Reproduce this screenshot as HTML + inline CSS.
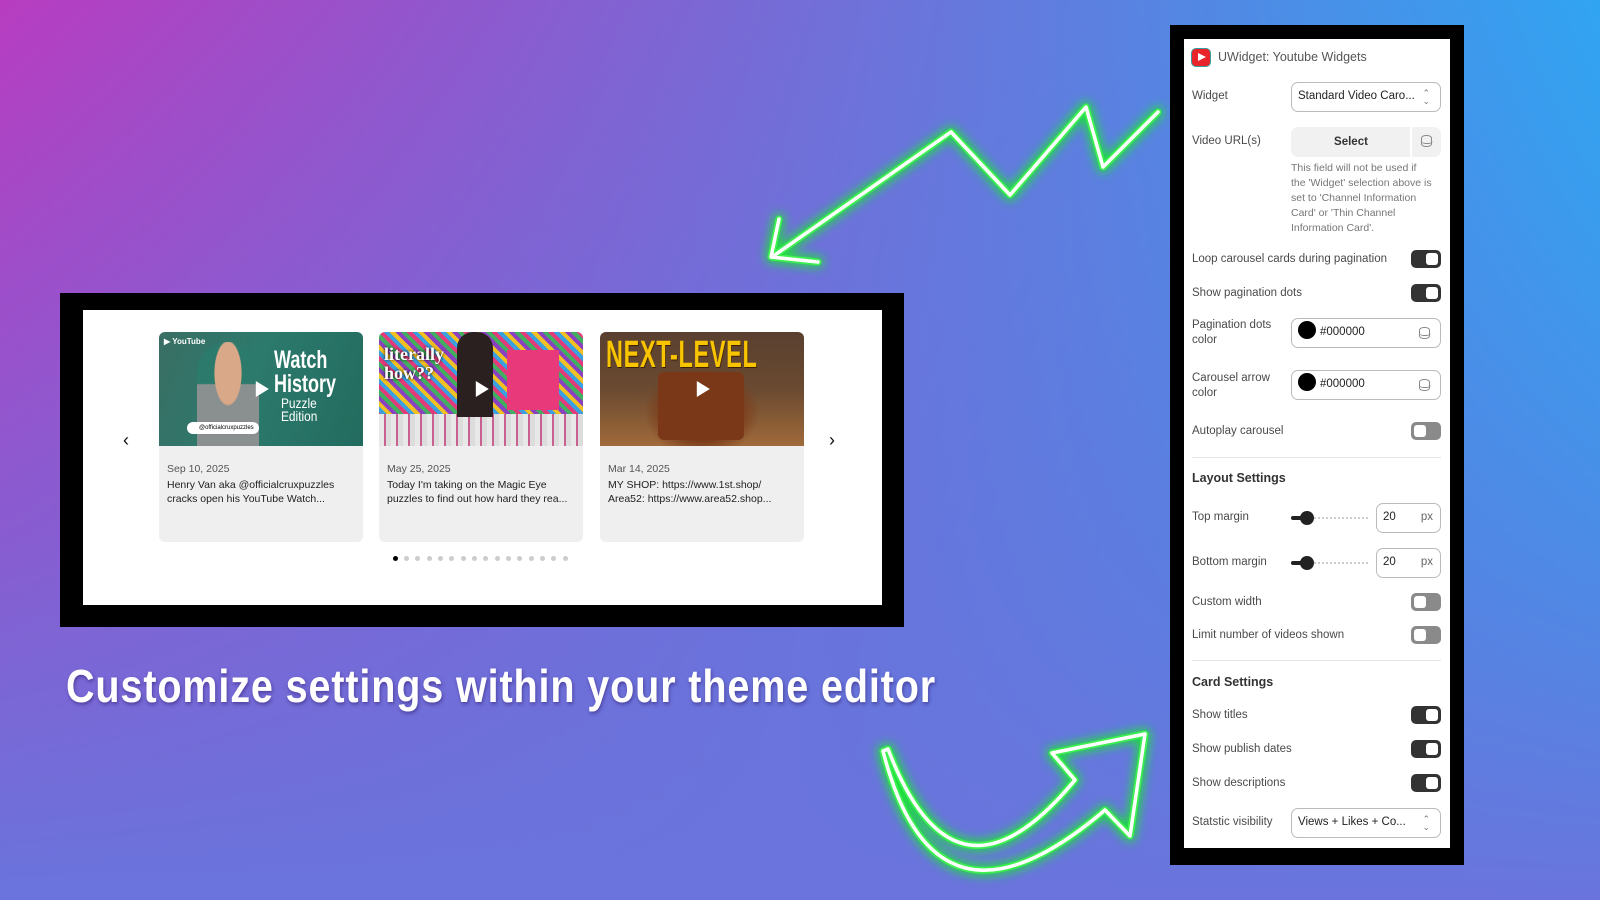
<!DOCTYPE html>
<html><head><meta charset="utf-8"><style>
*{margin:0;padding:0;box-sizing:border-box}
body{width:1600px;height:900px;overflow:hidden;position:relative;font-family:"Liberation Sans",sans-serif;
background:linear-gradient(to bottom,rgba(104,112,220,0) 0%,rgba(104,114,220,0.55) 60%,#6a74dc 100%),linear-gradient(100deg,#b83cc0 0%,#8a5ccf 30%,#5c80e0 62%,#3a9cee 85%,#22b2f6 100%)}
.a{position:absolute}
.frame{left:60px;top:293px;width:844px;height:334px;background:#000}
.white{left:83px;top:310px;width:799px;height:295px;background:#fff}
.card{top:332px;width:204px;height:210px;background:#efefef;border-radius:6px;overflow:hidden}
.thumb{position:absolute;left:0;top:0;width:100%;height:114px;overflow:hidden}
.date{position:absolute;left:8px;top:131px;font-size:10.5px;color:#555}
.desc{position:absolute;left:8px;top:147px;font-size:10.5px;color:#222;line-height:13.5px;white-space:nowrap}
.play{position:absolute;left:50%;top:50%;width:0;height:0;border-left:13px solid #fff;border-top:8px solid transparent;border-bottom:8px solid transparent;transform:translate(-40%,-50%)}
.dot{position:absolute;top:556px;width:5px;height:5px;border-radius:50%;background:#ccc}
.panelb{left:1170px;top:25px;width:294px;height:840px;background:#000}
.panel{left:1184px;top:39px;width:266px;height:809px;background:#fff}
.lbl{position:absolute;left:1192px;font-size:11.5px;color:#4a4a4a;line-height:15px}
.hd{position:absolute;left:1192px;font-size:12.5px;color:#333;font-weight:bold}
.tg{position:absolute;left:1411px;width:30px;height:18px;border-radius:5px;background:#333}
.tg:after{content:"";position:absolute;right:3px;top:3px;width:12px;height:12px;border-radius:3px;background:#fff}
.tg.off{background:#8a8a8a}
.tg.off:after{right:auto;left:3px}
.box{position:absolute;left:1291px;width:150px;height:30px;border:1.5px solid #bbb;border-radius:7px;background:#fff;font-size:11.5px;color:#222;line-height:27px;padding-left:6px}
.hr{position:absolute;left:1192px;width:249px;height:1px;background:#e4e4e4}
.sw{display:inline-block;width:18px;height:18px;border-radius:50%;background:#000;vertical-align:middle;margin:-3px 4px 0 0}
.db{position:absolute;right:10px;top:8px;width:11px;height:12px;border:1.5px solid #888;border-radius:5px/3px}
.db:before{content:"";position:absolute;left:-1.5px;right:-1.5px;top:2.5px;height:4px;border-bottom:1.5px solid #888;border-radius:0 0 5px 5px/0 0 3px 3px}
.chev{position:absolute;right:10px;top:6px;font-size:9px;line-height:8px;color:#777;text-align:center}
.sl{position:absolute;left:1291px;width:77px;height:4px}
.sl i{position:absolute;left:15px;right:0;top:1px;height:2px;border-top:2px dotted #ccc}
.sl b{position:absolute;left:0;top:0;width:15px;height:4px;background:#222;border-radius:2px}
.sl s{position:absolute;left:9px;top:-5px;width:14px;height:14px;border-radius:50%;background:#222}
.num{position:absolute;left:1376px;width:65px;height:30px;border:1.5px solid #bbb;border-radius:7px;font-size:11.5px;line-height:27px;padding-left:6px;color:#222}
.num span{position:absolute;right:7px;color:#666}
</style></head><body>

<svg class="a" style="left:0;top:0" width="1600" height="900">
<defs><filter id="g" x="-20%" y="-20%" width="140%" height="140%"><feGaussianBlur stdDeviation="5"/></filter></defs>
<g fill="none" stroke-linecap="round" stroke-linejoin="round">
<g stroke="#1fe03a" stroke-width="11" filter="url(#g)">
<path d="M1158,112 L1103,167 L1086,107 L1010,195 L951,132 L772,257 M779,219 L771,257 L818,262"/>
<path d="M883,751 Q935,955 1105,810 L1130,836 L1145,734 L1052,753 L1075,780 Q955,925 888,749 Z"/>
</g>
<g stroke="#3cf050" stroke-width="7">
<path d="M1158,112 L1103,167 L1086,107 L1010,195 L951,132 L772,257 M779,219 L771,257 L818,262"/>
<path d="M883,751 Q935,955 1105,810 L1130,836 L1145,734 L1052,753 L1075,780 Q955,925 888,749 Z"/>
</g>
<g stroke="#fff" stroke-width="3.5">
<path d="M1158,112 L1103,167 L1086,107 L1010,195 L951,132 L772,257 M779,219 L771,257 L818,262"/>
<path d="M883,751 Q935,955 1105,810 L1130,836 L1145,734 L1052,753 L1075,780 Q955,925 888,749 Z"/>
</g></g></svg>

<div class="a frame"></div>
<div class="a white"></div>
<div class="a" style="left:123px;top:430px;font-size:18px;color:#111">‹</div>
<div class="a" style="left:829px;top:430px;font-size:18px;color:#111">›</div>

<div class="a card" style="left:159px">
 <div class="thumb" style="background:linear-gradient(110deg,#3a6e64 0%,#2c7a6c 45%,#226b5e 100%)">
  <div class="a" style="left:38px;top:10px;width:62px;height:104px;background:radial-gradient(ellipse at 50% 30%,#d9a888 0 30%,transparent 32%),linear-gradient(#2c7a6c 40%,#8a8f90 41%);border-radius:30px 30px 0 0"></div>
  <div class="a" style="left:5px;top:5px;color:#fff;font-size:8px;font-weight:bold">▶ YouTube</div>
  <div class="a" style="left:115px;top:16px;color:#fff;font-size:25px;font-weight:bold;line-height:24px;transform:scaleX(.72);transform-origin:left">Watch<br>History</div>
  <div class="a" style="left:122px;top:65px;color:#fff;font-size:14px;line-height:13px;transform:scaleX(.85);transform-origin:left">Puzzle<br>Edition</div>
  <div class="a" style="left:28px;top:90px;width:72px;height:12px;background:#fff;border-radius:6px;font-size:6px;line-height:12px;padding-left:12px">@officialcruxpuzzles</div>
  <div class="play"></div>
 </div>
 <div class="date">Sep 10, 2025</div>
 <div class="desc">Henry Van aka @officialcruxpuzzles<br>cracks open his YouTube Watch...</div>
</div>
<div class="a card" style="left:379px">
 <div class="thumb" style="background:repeating-linear-gradient(45deg,#e23a7a 0 4px,#3aa0e0 4px 8px,#f2c020 8px 12px,#8a40c0 12px 16px,#40b060 16px 20px)">
  <div class="a" style="left:0;top:82px;width:100%;height:32px;background:repeating-linear-gradient(90deg,#e8e8e8 0 5px,#c86090 5px 7px,#dcdcdc 7px 12px)"></div>
  <div class="a" style="left:78px;top:0;width:36px;height:85px;background:#2a2020;border-radius:16px 16px 0 0"></div>
  <div class="a" style="left:128px;top:18px;width:52px;height:60px;background:#e83a7a"></div>
  <div class="a" style="left:5px;top:13px;color:#fff;font-family:'Liberation Serif',serif;font-weight:bold;font-size:18px;line-height:19px;text-shadow:0 0 3px #000">literally<br>how??</div>
  <div class="play"></div>
 </div>
 <div class="date">May 25, 2025</div>
 <div class="desc">Today I'm taking on the Magic Eye<br>puzzles to find out how hard they rea...</div>
</div>
<div class="a card" style="left:600px">
 <div class="thumb" style="background:radial-gradient(ellipse at 50% 70%,#7a3a1a 0 25%,transparent 40%),linear-gradient(180deg,#5a4030 0%,#6a4a30 50%,#a06a3a 100%)">
  <div class="a" style="left:58px;top:40px;width:86px;height:68px;background:#7a3818;border-radius:6px"></div>
  <div class="a" style="left:6px;top:2px;color:#f8c400;font-size:38px;font-weight:bold;letter-spacing:1px;transform:scaleX(.62);transform-origin:left;text-shadow:1px 1px 0 #3a2000;white-space:nowrap">NEXT-LEVEL</div>
  <div class="play"></div>
 </div>
 <div class="date">Mar 14, 2025</div>
 <div class="desc">MY SHOP: https://www.1st.shop/<br>Area52: https://www.area52.shop...</div>
</div>

<div class="dot" style="left:393px;background:#000"></div>
<div class="dot" style="left:404px"></div><div class="dot" style="left:415px"></div><div class="dot" style="left:427px"></div><div class="dot" style="left:438px"></div><div class="dot" style="left:449px"></div><div class="dot" style="left:461px"></div><div class="dot" style="left:472px"></div><div class="dot" style="left:483px"></div><div class="dot" style="left:495px"></div><div class="dot" style="left:506px"></div><div class="dot" style="left:517px"></div><div class="dot" style="left:529px"></div><div class="dot" style="left:540px"></div><div class="dot" style="left:551px"></div><div class="dot" style="left:563px"></div>

<div class="a" style="left:66px;top:659px;color:#fff;font-size:46px;font-weight:bold;white-space:nowrap;letter-spacing:1px;transform:scaleX(.86);transform-origin:left;text-shadow:1px 2px 4px rgba(40,20,100,.5)">Customize settings within your theme editor</div>

<div class="a panelb"></div>
<div class="a panel"></div>
<div class="a" style="left:1192px;top:49px;width:18px;height:17px;border-radius:4px;background:#e8242a;box-shadow:0 0 0 1px #3a9aa0"><div class="a" style="left:6px;top:4px;border-left:8px solid #fff;border-top:4.5px solid transparent;border-bottom:4.5px solid transparent"></div></div>
<div class="a" style="left:1218px;top:50px;font-size:12.5px;color:#555">UWidget: Youtube Widgets</div>

<div class="lbl" style="top:89px">Widget</div>
<div class="box" style="top:82px">Standard Video Caro...<div class="chev">⌃<br>⌄</div></div>

<div class="lbl" style="top:134px">Video URL(s)</div>
<div class="a" style="left:1291px;top:127px;width:150px;height:30px;background:#f1f1f1;border-radius:7px;font-size:11.5px;font-weight:bold;color:#333;line-height:30px;text-align:center;padding-right:30px">Select<div class="a" style="left:119px;top:0;width:1.5px;height:30px;background:#fff"></div><div class="db" style="right:9px"></div></div>
<div class="a" style="left:1291px;top:161px;font-size:10.5px;color:#777;line-height:15px">This field will not be used if<br>the 'Widget' selection above is<br>set to 'Channel Information<br>Card' or 'Thin Channel<br>Information Card'.</div>

<div class="lbl" style="top:252px">Loop carousel cards during pagination</div><div class="tg" style="top:250px"></div>
<div class="lbl" style="top:286px">Show pagination dots</div><div class="tg" style="top:284px"></div>
<div class="lbl" style="top:318px">Pagination dots<br>color</div>
<div class="box" style="top:318px"><span class="sw"></span>#000000<div class="db"></div></div>
<div class="lbl" style="top:371px">Carousel arrow<br>color</div>
<div class="box" style="top:370px"><span class="sw"></span>#000000<div class="db"></div></div>
<div class="lbl" style="top:424px">Autoplay carousel</div><div class="tg off" style="top:422px"></div>
<div class="hr" style="top:457px"></div>
<div class="hd" style="top:471px">Layout Settings</div>
<div class="lbl" style="top:510px">Top margin</div>
<div class="sl" style="top:516px"><i></i><b></b><s></s></div>
<div class="num" style="top:503px">20<span>px</span></div>
<div class="lbl" style="top:555px">Bottom margin</div>
<div class="sl" style="top:561px"><i></i><b></b><s></s></div>
<div class="num" style="top:548px">20<span>px</span></div>
<div class="lbl" style="top:595px">Custom width</div><div class="tg off" style="top:593px"></div>
<div class="lbl" style="top:628px">Limit number of videos shown</div><div class="tg off" style="top:626px"></div>
<div class="hr" style="top:660px"></div>
<div class="hd" style="top:675px">Card Settings</div>
<div class="lbl" style="top:708px">Show titles</div><div class="tg" style="top:706px"></div>
<div class="lbl" style="top:742px">Show publish dates</div><div class="tg" style="top:740px"></div>
<div class="lbl" style="top:776px">Show descriptions</div><div class="tg" style="top:774px"></div>
<div class="lbl" style="top:815px">Statstic visibility</div>
<div class="box" style="top:808px">Views + Likes + Co...<div class="chev">⌃<br>⌄</div></div>
</body></html>
